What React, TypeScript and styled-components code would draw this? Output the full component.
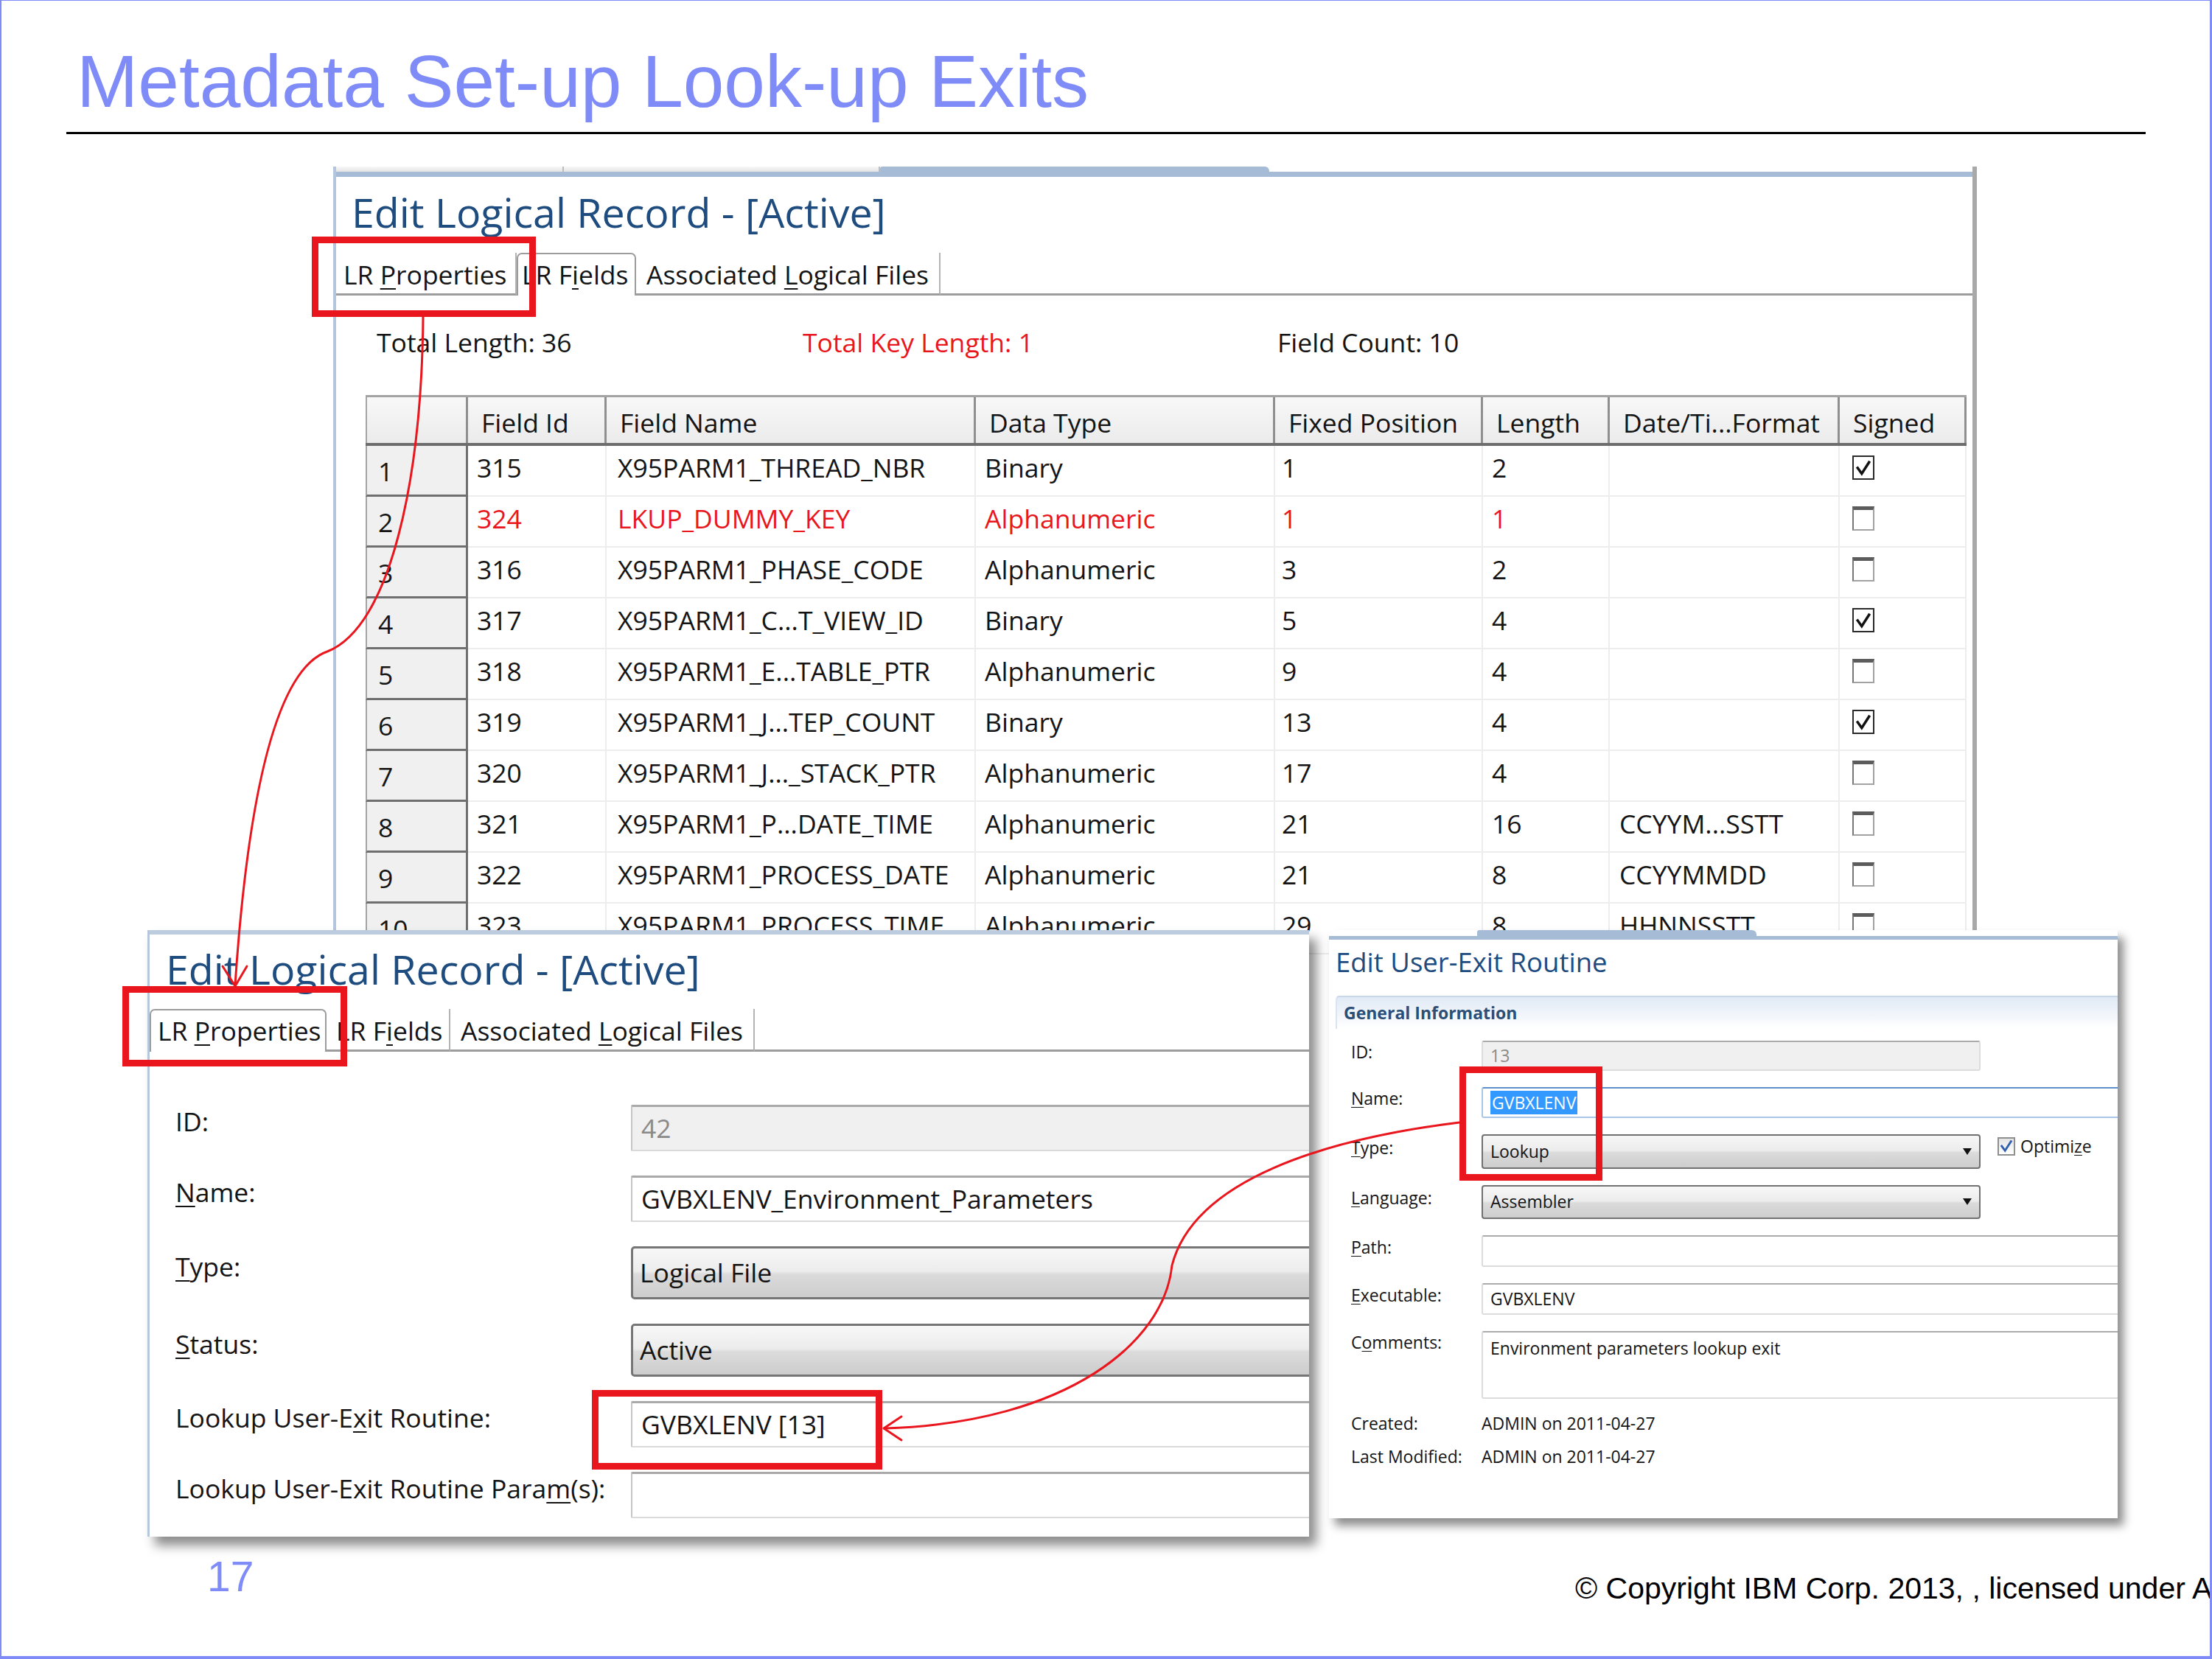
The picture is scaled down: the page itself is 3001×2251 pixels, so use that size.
import React from 'react';
import styled, { createGlobalStyle, css } from 'styled-components';

const SLIDE_BLUE = '#7f8cf7';
const RED = '#e9161e';
const UI_FONT = `"Open Sans", "Noto Sans", "DejaVu Sans", sans-serif`;
const SLIDE_FONT = `"Liberation Sans", Arial, sans-serif`;
const WINDOW_TITLE = '#1e4c7f';
const TEXT = '#141414';
const STRIP_BLUE = '#a5bbd6';

const GlobalStyle = createGlobalStyle`
  *, *::before, *::after { box-sizing: border-box; }
  html, body { margin: 0; padding: 0; background: #ffffff; }
  body { font-family: ${SLIDE_FONT}; }
`;

/* ---------- slide frame ---------- */

const Slide = styled.main`
  position: relative;
  width: 3001px;
  height: 2251px;
  display: flex;
  flex-direction: column;
  border-style: solid;
  border-color: ${SLIDE_BLUE};
  border-width: 1px 3px 4px 2px;
  background: #fff;
  overflow: hidden;
  font-family: ${SLIDE_FONT};
`;

const SlideTitle = styled.h1`
  margin: 59px 0 0 102px;
  font-size: 100px;
  font-weight: 400;
  line-height: 1;
  color: ${SLIDE_BLUE};
  white-space: nowrap;
`;

const TitleRule = styled.hr`
  margin: 19px 0 0 88px;
  width: 2821px;
  height: 3px;
  border: 0;
  background: #000;
`;

const Spacer = styled.div`
  flex: 1;
`;

const Footer = styled.footer`
  display: grid;
  grid-template-columns: 2135px minmax(0, 1fr);
  align-items: end;
  padding-bottom: 71px;
  line-height: 1;
`;

const PageNumber = styled.div`
  padding-left: 279px;
  margin-bottom: 8px;
  font-size: 57px;
  color: ${SLIDE_BLUE};
`;

const Copyright = styled.div`
  font-size: 41px;
  color: #000;
  white-space: nowrap;
`;

/* ---------- generic editor window ---------- */

const EditorWindow = styled.section<{ $left: number; $top: number; $width: number; $height: number; $layer: number }>`
  position: absolute;
  left: ${p => p.$left}px;
  top: ${p => p.$top}px;
  width: ${p => p.$width}px;
  height: ${p => p.$height}px;
  z-index: ${p => p.$layer};
  display: flex;
  flex-direction: column;
  background: #fff;
  font-family: ${UI_FONT};
  color: ${TEXT};
  overflow: hidden;
`;

const FieldsWindow = styled(EditorWindow)`
  border-left: 4px solid #b3c6dd;
  border-right: 6px solid #a9a9a9;
`;

const PropertiesWindow = styled(EditorWindow)`
  border-left: 3px solid #b7c7db;
  box-shadow: 10px 12px 14px rgba(0, 0, 0, 0.45);
`;

const RoutineWindow = styled(EditorWindow)`
  box-shadow: 8px 10px 12px rgba(0, 0, 0, 0.45);
`;

const EditorStrip = styled.div`
  display: flex;
  flex-direction: column;
  flex: none;
`;

const StripTabs = styled.div<{ $h: number }>`
  display: flex;
  height: ${p => p.$h}px;
`;

const StripTab = styled.div<{ $w: number; $tone: 'grey' | 'blue' }>`
  flex: none;
  width: ${p => p.$w}px;
  ${p =>
    p.$tone === 'grey'
      ? css`
          background: linear-gradient(#f8f8f8, #e4e4e4);
          border-right: 2px solid #bdbdbd;
        `
      : css`
          background: ${STRIP_BLUE};
          border-radius: 3px 6px 0 0;
        `}
`;

const StripGap = styled.div<{ $w?: number }>`
  flex: ${p => (p.$w ? 'none' : '1')};
  width: ${p => (p.$w ? `${p.$w}px` : 'auto')};
`;

const StripLine = styled.div<{ $h: number; $light?: boolean }>`
  height: ${p => p.$h}px;
  background: ${p => (p.$light ? '#bccbde' : STRIP_BLUE)};
`;

const EditorTitle = styled.h2<{ $size: number; $mt: number; $ml: number }>`
  margin: ${p => p.$mt}px 0 0 ${p => p.$ml}px;
  font-size: ${p => p.$size}px;
  font-weight: 400;
  line-height: 1;
  color: ${WINDOW_TITLE};
  white-space: nowrap;
`;

const Mn = styled.span`
  text-decoration: underline;
  text-decoration-thickness: 0.06em;
  text-underline-offset: 0.14em;
`;

/* ---------- tabs ---------- */

const TabBar = styled.div<{ $mt: number }>`
  display: flex;
  height: 58px;
  margin-top: ${p => p.$mt}px;
  font-size: 35.5px;
  line-height: 1;
`;

const Tab = styled.div<{ $w: number; $pl: number; $active?: boolean }>`
  flex: none;
  width: ${p => p.$w}px;
  display: flex;
  align-items: flex-end;
  padding: 0 0 7px ${p => p.$pl}px;
  white-space: nowrap;
  color: ${TEXT};
  border-bottom: 3px solid #9c9c9c;
  border-right: 2px solid #b3b3b3;
  ${p =>
    p.$active &&
    css`
      padding-bottom: 10px;
      border: 2px solid #9c9c9c;
      border-bottom: none;
      border-radius: 7px 7px 0 0;
    `}
`;

const TabLabel = styled.span`
  white-space: pre;
`;

const TabFill = styled.div`
  flex: 1;
  border-bottom: 3px solid #9c9c9c;
`;

/* ---------- LR fields window ---------- */

const StatsRow = styled.div`
  display: grid;
  grid-template-columns: 578px 644px auto;
  margin-top: 46px;
  padding-left: 55px;
  font-size: 35.5px;
  line-height: 1;
`;

const Stat = styled.span<{ $alert?: boolean }>`
  white-space: nowrap;
  color: ${p => (p.$alert ? RED : TEXT)};
`;

const COLS = '139px 188px 501px 406px 282px 172px 312px 172px';

const FieldTable = styled.div`
  margin: 54px 0 0 40px;
  width: 2172px;
  display: flex;
  flex-direction: column;
  font-size: 35.5px;
  line-height: 1;
`;

const HeaderRow = styled.div`
  display: grid;
  grid-template-columns: ${COLS};
  height: 69px;
  flex: none;
  border-top: 3px solid #a3a3a3;
  border-bottom: 4px solid #6d6d6d;
  background: linear-gradient(#f8f8f8, #ebebeb);
`;

const HeaderCell = styled.div`
  display: flex;
  align-items: center;
  padding: 8px 0 0 18px;
  border-right: 3px solid #8f8f8f;
  white-space: nowrap;
  overflow: hidden;
  color: ${TEXT};
  &:first-child {
    border-left: 2px solid #a5a5a5;
  }
`;

const FieldRow = styled.div<{ $key?: boolean }>`
  display: grid;
  grid-template-columns: ${COLS};
  height: 69px;
  flex: none;
  color: ${p => (p.$key ? RED : TEXT)};
`;

const RowNumber = styled.div`
  display: flex;
  align-items: center;
  padding: 4px 0 0 15px;
  background: #f0f0f0;
  border-left: 2px solid #a5a5a5;
  border-right: 3px solid #6f6f6f;
  border-bottom: 3px solid #6f6f6f;
  color: ${TEXT};
`;

const FieldCell = styled.div<{ $pl?: number }>`
  display: flex;
  align-items: center;
  padding: 0 0 8px ${p => p.$pl ?? 12}px;
  border-right: 2px solid #ededed;
  border-bottom: 2px solid #ededed;
  white-space: nowrap;
  overflow: hidden;
`;

const GridCheck = styled.span<{ $on: boolean }>`
  width: 30px;
  height: 33px;
  display: inline-flex;
  align-items: center;
  justify-content: center;
  background: #fff;
  ${p =>
    p.$on
      ? css`
          border: 2px solid #2b2b2b;
        `
      : css`
          border: 2px solid #a2a2a2;
          border-top: 5px solid #5c5c5c;
          border-left-color: #777;
        `}
`;

/* ---------- LR properties window ---------- */

const PropertiesForm = styled.div`
  display: grid;
  grid-template-columns: 618px 1fr;
  row-gap: 33px;
  margin-top: 72px;
  padding-left: 35px;
  font-size: 35.5px;
  line-height: 1;
`;

const PropLabel = styled.div`
  align-self: center;
  margin-bottom: 16px;
  white-space: nowrap;
  color: ${TEXT};
`;

const PropInput = styled.div<{ $disabled?: boolean }>`
  height: 63px;
  margin-right: -12px;
  display: flex;
  align-items: center;
  padding-left: 12px;
  white-space: nowrap;
  background: ${p => (p.$disabled ? '#f0f0f0' : '#fff')};
  color: ${p => (p.$disabled ? '#8a8a8a' : TEXT)};
  border: 2px solid #dadada;
  border-top: 3px solid #a9a9a9;
  border-left-color: #c6c6c6;
  border-radius: 2px;
`;

const PropCombo = styled.div`
  height: 72px;
  margin-right: -12px;
  display: flex;
  align-items: center;
  padding-left: 9px;
  white-space: nowrap;
  border: 3px solid #767676;
  border-radius: 5px;
  background: linear-gradient(#f7f7f7 0%, #ececec 47%, #dbdbdb 53%, #cdcdcd 100%);
`;

/* ---------- user-exit routine window ---------- */

const SectionHeader = styled.div`
  margin: 27px 0 0 9px;
  height: 45px;
  padding: 10px 0 0 9px;
  border-top: 2px solid #c8d7e9;
  border-left: 2px solid #dbe5f1;
  border-radius: 5px 0 0 0;
  background: linear-gradient(#e0eaf5, #ffffff);
  font-size: 23px;
  font-weight: 700;
  line-height: 1;
  color: #2c4f78;
  white-space: nowrap;
`;

const RoutineForm = styled.div`
  display: grid;
  grid-template-columns: 177px 677px 1fr;
  row-gap: 22px;
  margin-top: 16px;
  padding-left: 30px;
  font-size: 23px;
  line-height: 1;
`;

const RoutineLabel = styled.div<{ $top?: boolean }>`
  white-space: nowrap;
  color: ${TEXT};
  ${p =>
    p.$top
      ? css`
          align-self: start;
          margin-top: 4px;
        `
      : css`
          align-self: center;
          margin-bottom: 10px;
        `}
`;

const RoutineInput = styled.div<{ $h: number; $wide?: boolean; $disabled?: boolean; $focused?: boolean; $multi?: boolean }>`
  grid-column: ${p => (p.$wide ? '2 / 4' : 'auto')};
  height: ${p => p.$h}px;
  margin-right: ${p => (p.$wide ? '-8px' : '0')};
  display: flex;
  align-items: ${p => (p.$multi ? 'flex-start' : 'center')};
  padding: ${p => (p.$multi ? '10px 0 0 10px' : '0 0 0 10px')};
  white-space: nowrap;
  background: ${p => (p.$disabled ? '#f0f0f0' : '#fff')};
  color: ${p => (p.$disabled ? '#8a8a8a' : TEXT)};
  border: 2px solid ${p => (p.$focused ? '#a9c6e8' : '#dcdcdc')};
  border-top-color: ${p => (p.$focused ? '#5d8fca' : '#ababab')};
  border-radius: 3px;
`;

const Selection = styled.span`
  display: inline-block;
  height: 32px;
  line-height: 32px;
  padding: 0 2px;
  background: #3399ff;
  color: #fff;
`;

const RoutineCombo = styled.div<{ $h: number }>`
  height: ${p => p.$h}px;
  display: flex;
  align-items: center;
  justify-content: space-between;
  padding: 0 10px 0 10px;
  white-space: nowrap;
  border: 2px solid #717171;
  border-radius: 4px;
  background: linear-gradient(#f7f7f7 0%, #ececec 47%, #dbdbdb 53%, #cdcdcd 100%);
`;

const ComboArrow = styled.span`
  width: 0;
  height: 0;
  border-left: 6px solid transparent;
  border-right: 6px solid transparent;
  border-top: 9px solid #111;
`;

const OptimizeCell = styled.label`
  align-self: center;
  margin-bottom: 14px;
  display: flex;
  align-items: center;
  gap: 7px;
  padding-left: 23px;
  white-space: nowrap;
`;

const OptimizeBox = styled.span`
  width: 24px;
  height: 25px;
  display: inline-flex;
  align-items: center;
  justify-content: center;
  border: 2px solid #8e8f8f;
  background: linear-gradient(#e4e4e4, #ffffff);
`;

const OptimizeText = styled.span`
  white-space: nowrap;
`;

const InfoValue = styled.div`
  grid-column: 2 / 4;
  align-self: center;
  white-space: nowrap;
  color: ${TEXT};
`;

const InfoLabel = styled.div`
  align-self: center;
  white-space: nowrap;
  color: ${TEXT};
`;

const InfoSlot = styled.div`
  height: 30px;
`;

/* ---------- annotation layer ---------- */

const AnnotationLayer = styled.svg`
  position: absolute;
  left: -2px;
  top: -1px;
  width: 3001px;
  height: 2251px;
  z-index: 10;
  pointer-events: none;
`;

/* ---------- data ---------- */

type Field = {
  n: number;
  id: string;
  name: string;
  type: string;
  pos: string;
  len: string;
  fmt: string;
  signed: boolean;
  key?: boolean;
};

const fields: Field[] = [
  { n: 1, id: '315', name: 'X95PARM1_THREAD_NBR', type: 'Binary', pos: '1', len: '2', fmt: '', signed: true },
  { n: 2, id: '324', name: 'LKUP_DUMMY_KEY', type: 'Alphanumeric', pos: '1', len: '1', fmt: '', signed: false, key: true },
  { n: 3, id: '316', name: 'X95PARM1_PHASE_CODE', type: 'Alphanumeric', pos: '3', len: '2', fmt: '', signed: false },
  { n: 4, id: '317', name: 'X95PARM1_C...T_VIEW_ID', type: 'Binary', pos: '5', len: '4', fmt: '', signed: true },
  { n: 5, id: '318', name: 'X95PARM1_E...TABLE_PTR', type: 'Alphanumeric', pos: '9', len: '4', fmt: '', signed: false },
  { n: 6, id: '319', name: 'X95PARM1_J...TEP_COUNT', type: 'Binary', pos: '13', len: '4', fmt: '', signed: true },
  { n: 7, id: '320', name: 'X95PARM1_J..._STACK_PTR', type: 'Alphanumeric', pos: '17', len: '4', fmt: '', signed: false },
  { n: 8, id: '321', name: 'X95PARM1_P...DATE_TIME', type: 'Alphanumeric', pos: '21', len: '16', fmt: 'CCYYM...SSTT', signed: false },
  { n: 9, id: '322', name: 'X95PARM1_PROCESS_DATE', type: 'Alphanumeric', pos: '21', len: '8', fmt: 'CCYYMMDD', signed: false },
  { n: 10, id: '323', name: 'X95PARM1_PROCESS_TIME', type: 'Alphanumeric', pos: '29', len: '8', fmt: 'HHNNSSTT', signed: false },
];

const headers = ['', 'Field Id', 'Field Name', 'Data Type', 'Fixed Position', 'Length', 'Date/Ti...Format', 'Signed'];

const CheckMark = ({ color, size }: { color: string; size: number }) => (
  <svg width={size} height={size} viewBox="0 0 20 20" fill="none">
    <path d="M3 10 L8 17 L17 3" stroke={color} strokeWidth="3.2" strokeLinecap="square" strokeLinejoin="miter" />
  </svg>
);

const LogicalRecordTabs = ({ active, widths, pads, mt }: { active: number; widths: number[]; pads: number[]; mt: number }) => (
  <TabBar $mt={mt}>
    <Tab $w={widths[0]} $pl={pads[0]} $active={active === 0}>
      <TabLabel>
        LR <Mn>P</Mn>roperties
      </TabLabel>
    </Tab>
    <Tab $w={widths[1]} $pl={pads[1]} $active={active === 1}>
      <TabLabel>
        LR F<Mn>i</Mn>elds
      </TabLabel>
    </Tab>
    <Tab $w={widths[2]} $pl={pads[2]} $active={active === 2}>
      <TabLabel>
        Associated <Mn>L</Mn>ogical Files
      </TabLabel>
    </Tab>
    <TabFill />
  </TabBar>
);

export default function App() {
  return (
    <>
      <GlobalStyle />
      <Slide>
        <SlideTitle>Metadata Set-up Look-up Exits</SlideTitle>
        <TitleRule />
        <Spacer />
        <Footer>
          <PageNumber>17</PageNumber>
          <Copyright>© Copyright IBM Corp. 2013, , licensed under A</Copyright>
        </Footer>

        {/* Window 1: LR Fields */}
        <FieldsWindow $left={450} $top={225} $width={2230} $height={1076} $layer={1}>
          <EditorStrip>
            <StripTabs $h={7}>
              <StripTab $w={309} $tone="grey" />
              <StripTab $w={429} $tone="grey" />
              <StripTab $w={528} $tone="blue" />
              <StripGap />
            </StripTabs>
            <StripLine $h={7} />
          </EditorStrip>
          <EditorTitle $size={55.5} $mt={20} $ml={21}>
            Edit Logical Record - [Active]
          </EditorTitle>
          <LogicalRecordTabs active={1} widths={[245, 162, 413]} pads={[10, 5, 14]} mt={27} />
          <StatsRow>
            <Stat>Total Length: 36</Stat>
            <Stat $alert>Total Key Length: 1</Stat>
            <Stat>Field Count: 10</Stat>
          </StatsRow>
          <FieldTable>
            <HeaderRow>
              {headers.map((h, i) => (
                <HeaderCell key={i}>{h}</HeaderCell>
              ))}
            </HeaderRow>
            {fields.map(f => (
              <FieldRow key={f.n} $key={f.key}>
                <RowNumber>{f.n}</RowNumber>
                <FieldCell>{f.id}</FieldCell>
                <FieldCell $pl={15}>{f.name}</FieldCell>
                <FieldCell>{f.type}</FieldCell>
                <FieldCell $pl={9}>{f.pos}</FieldCell>
                <FieldCell>{f.len}</FieldCell>
                <FieldCell $pl={13}>{f.fmt}</FieldCell>
                <FieldCell $pl={17}>
                  <GridCheck $on={f.signed}>{f.signed && <CheckMark color="#111" size={22} />}</GridCheck>
                </FieldCell>
              </FieldRow>
            ))}
          </FieldTable>
        </FieldsWindow>

        {/* Window 2: LR Properties */}
        <PropertiesWindow $left={198} $top={1261} $width={1576} $height={823} $layer={2}>
          <EditorStrip>
            <StripLine $h={6} $light />
          </EditorStrip>
          <EditorTitle $size={55.5} $mt={19} $ml={22}>
            Edit Logical Record - [Active]
          </EditorTitle>
          <LogicalRecordTabs active={0} widths={[240, 168, 413]} pads={[9, 13, 14]} mt={26} />
          <PropertiesForm>
            <PropLabel>ID:</PropLabel>
            <PropInput $disabled>42</PropInput>
            <PropLabel>
              <Mn>N</Mn>ame:
            </PropLabel>
            <PropInput>GVBXLENV_Environment_Parameters</PropInput>
            <PropLabel>
              <Mn>T</Mn>ype:
            </PropLabel>
            <PropCombo>Logical File</PropCombo>
            <PropLabel>
              <Mn>S</Mn>tatus:
            </PropLabel>
            <PropCombo>Active</PropCombo>
            <PropLabel>
              Lookup User-E<Mn>x</Mn>it Routine:
            </PropLabel>
            <PropInput>GVBXLENV [13]</PropInput>
            <PropLabel>
              Lookup User-Exit Routine Para<Mn>m</Mn>(s):
            </PropLabel>
            <PropInput />
          </PropertiesForm>
        </PropertiesWindow>

        {/* Window 3: User-Exit Routine */}
        <RoutineWindow $left={1801} $top={1261} $width={1070} $height={798} $layer={2}>
          <EditorStrip>
            <StripTabs $h={8}>
              <StripGap $w={201} />
              <StripTab $w={379} $tone="blue" />
              <StripGap />
            </StripTabs>
            <StripLine $h={5} />
          </EditorStrip>
          <EditorTitle $size={36.5} $mt={12} $ml={9}>
            Edit User-Exit Routine
          </EditorTitle>
          <SectionHeader>General Information</SectionHeader>
          <RoutineForm>
            <RoutineLabel>ID:</RoutineLabel>
            <RoutineInput $h={41} $disabled>
              13
            </RoutineInput>
            <div />

            <RoutineLabel>
              <Mn>N</Mn>ame:
            </RoutineLabel>
            <RoutineInput $h={42} $wide $focused>
              <Selection>GVBXLENV</Selection>
            </RoutineInput>

            <RoutineLabel>
              <Mn>T</Mn>ype:
            </RoutineLabel>
            <RoutineCombo $h={47}>
              <span>Lookup</span>
              <ComboArrow />
            </RoutineCombo>
            <OptimizeCell>
              <OptimizeBox>
                <CheckMark color="#2f5fae" size={18} />
              </OptimizeBox>
              <OptimizeText>
                Optimi<Mn>z</Mn>e
              </OptimizeText>
            </OptimizeCell>

            <RoutineLabel>
              <Mn>L</Mn>anguage:
            </RoutineLabel>
            <RoutineCombo $h={46}>
              <span>Assembler</span>
              <ComboArrow />
            </RoutineCombo>
            <div />

            <RoutineLabel>
              <Mn>P</Mn>ath:
            </RoutineLabel>
            <RoutineInput $h={43} $wide />

            <RoutineLabel>
              <Mn>E</Mn>xecutable:
            </RoutineLabel>
            <RoutineInput $h={43} $wide>
              GVBXLENV
            </RoutineInput>

            <RoutineLabel $top>
              C<Mn>o</Mn>mments:
            </RoutineLabel>
            <RoutineInput $h={92} $wide $multi>
              Environment parameters lookup exit
            </RoutineInput>

            <InfoLabel>Created:</InfoLabel>
            <InfoValue>ADMIN on 2011-04-27</InfoValue>

            <InfoLabel>Last Modified:</InfoLabel>
            <InfoValue>ADMIN on 2011-04-27</InfoValue>
            <InfoSlot />
          </RoutineForm>
        </RoutineWindow>

        <AnnotationLayer viewBox="0 0 3001 2251">
          <g fill="none" stroke={RED} strokeWidth={9}>
            <rect x={427.5} y={325.5} width={295} height={100} />
            <rect x={170.5} y={1342.5} width={296} height={100} />
            <rect x={807.5} y={1890.5} width={385} height={99} />
            <rect x={1984.5} y={1451.5} width={185} height={146} />
          </g>
          <g fill="none" stroke={RED} strokeWidth={3} strokeLinecap="round" strokeLinejoin="round">
            <path d="M 574 430 C 572 650 530 850 444 884 C 370 910 335 1100 319 1336" />
            <path d="M 302 1311 L 319 1338 L 335 1311" />
            <path d="M 1980 1523 C 1800 1545 1620 1600 1590 1717 C 1580 1820 1450 1930 1201 1938" />
            <path d="M 1223 1922 L 1199 1938 L 1223 1954" />
          </g>
        </AnnotationLayer>
      </Slide>
    </>
  );
}
